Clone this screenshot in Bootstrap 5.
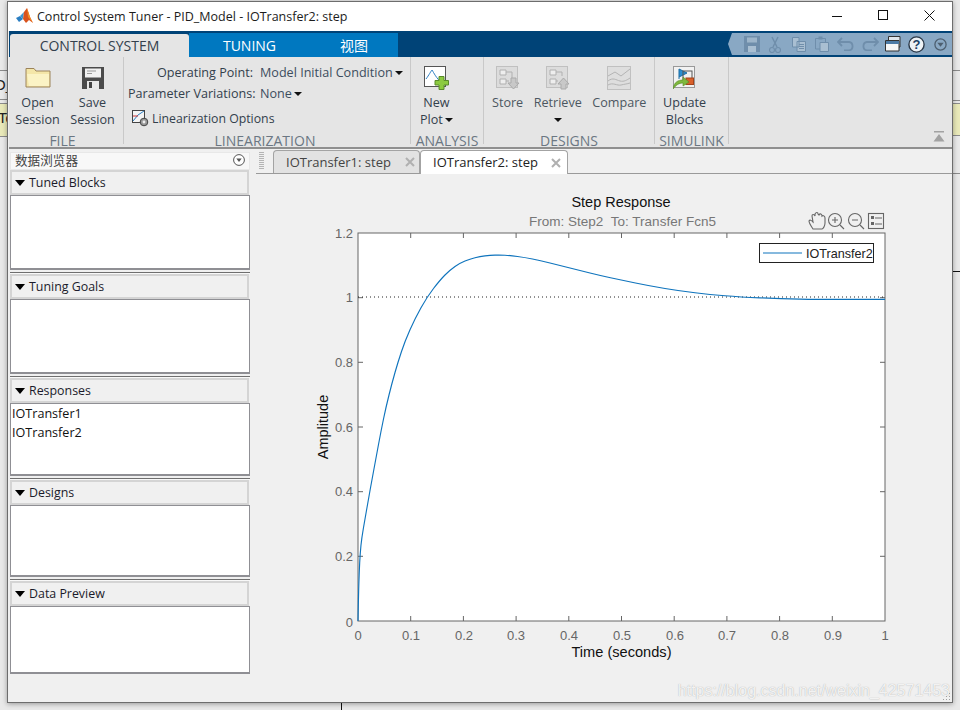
<!DOCTYPE html>
<html lang="en">
<head>
<meta charset="utf-8">
<title>Control System Tuner</title>
<link href="https://cdn.jsdelivr.net/npm/bootstrap@5.3.0/dist/css/bootstrap.min.css" rel="stylesheet">
<style>
html,body{height:710px;overflow:hidden}
body{background:#e9e9e9;font-family:"Open Sans","Noto Sans CJK SC",sans-serif;font-size:12.6px;line-height:17px;color:#33404c;position:relative}
.bk{position:absolute;z-index:0}
.bk-yl{background:#e9e9b9;border-top:1px solid #8b8b8b;border-bottom:1px solid #8b8b8b}
.bk-ln{background:#8b8b8b;height:1px}
.bk-tx{font-family:"Liberation Sans",sans-serif;font-size:15px;color:#222;line-height:18px}
.win{position:relative;z-index:1;margin:1px 0 0 7px;width:946px;height:702px;background:#f0f0f0;border:1px solid #6d6d6d;box-shadow:0 1px 5px rgba(0,0,0,.35);overflow:hidden}
.ttl{height:29px;background:#fff;color:#1c1c1c;padding-left:8px}
.ttl-t{margin-left:4px;font-size:12.5px}
.ctl{width:46px;height:29px;padding-bottom:3px}
.rtabs{height:26px;background:#004377;margin-left:1px}
.rt-blue{height:24px;width:209px;background:#0078c0;align-self:flex-end;color:#fff;font-size:14px}
.rt-on{width:179px;height:23px;margin-left:1px;background:#e5e5e5;border-radius:3px 3px 0 0;align-self:flex-end;color:#33404c;font-size:14px}
.rt-a{width:121px}
.rt-b{width:88px}
.qa{margin-left:auto;height:22px;width:224px;margin-top:2px;background:#89a8c4;clip-path:polygon(4px 0,100% 0,100% 100%,4px 100%,0 50%);padding-left:12px}
.qa-i{width:24.4px;height:22px}
.rib{height:92px;margin-left:1px;background:#e5e5e5;border-bottom:2px solid #8f8f8f;position:relative}
.grp{padding-top:3px;position:relative}
.grp-s{border-right:1px solid #c9c9c9;height:87px}
.grp-b{flex:1 1 auto}
.grp-l{font-size:14px;line-height:17px;color:#6b7783;text-align:center;height:18px;margin-bottom:-6px;white-space:nowrap}
.rb{padding-top:6px;text-align:center;white-space:nowrap}
.rb-i{height:27.5px}
.rb-t{display:block;line-height:17px}
.dim{color:#4c5761}
.car{display:inline-block;width:0;height:0;border-left:4.5px solid transparent;border-right:4.5px solid transparent;border-top:4.5px solid #111;vertical-align:2px;margin-left:2px}
.f-w{width:115px}
.f-b{padding-left:1px}
.f-l{padding-right:7px}
.l-w{width:287px}
.l-b{padding-top:1.5px}
.a-w{width:73px}
.a-b{padding-left:9px}
.d-w{width:171px}
.d-b{padding-left:8px;gap:10.500px}
.s-w{width:74px}
.s-b{padding-left:8px}
.rb55{width:55px}
.lbl{width:125px;text-align:right;white-space:nowrap;flex:none}
.lin-r{height:21.5px;padding-left:4px;white-space:nowrap}
.lin-o{margin-top:3px}
.lin-v{margin-left:7px;color:#3c4d5e}
.lin-t{margin-left:3px;font-size:12.3px}
.clp{position:absolute;right:7px;bottom:5px}
.left{width:240px;margin-left:2px;margin-top:3px;flex:none}
.ph{height:18px;background:#f8f8f8;padding:0 4px 2px;color:#444;border:1px solid #e8e8e8}
.sec-h{height:25px;background:#f0f0f0;border:2px solid #d4d4d4;color:#1b1b2b;padding-left:3px;margin-right:1px;line-height:20px;font-size:12.4px}
.arr{width:0;height:0;border-left:5.5px solid transparent;border-right:5.5px solid transparent;border-top:6px solid #000;margin-right:4px}
.sec-b{background:#fff;border:1px solid #8f8f94;border-bottom-width:2px;color:#111;padding:0 1px;line-height:19px}
.h75{height:75px}.h73{height:73px}.h72{height:72px}.h68{height:68px}
.sep{height:2px;border-top:1px solid #6f6f6f;margin-top:2px;background:#f8f8f8}
.main{width:696px;margin-left:6px}
.tabs{height:25px;position:relative;border-bottom:1px solid #9a9a9a;padding-top:1px;padding-left:17px}
.grip{position:absolute;left:3px;top:3px;width:5px;height:17px;background:repeating-linear-gradient(#b4b4b4 0 1px,transparent 1px 2px)}
.dt{width:147px;height:23px;border:1px solid #a3a3a3;border-bottom:0;border-radius:4px 4px 0 0;background:#e2e2e2;color:#444;padding-left:12px;font-size:13px;white-space:nowrap}
.dt-on{width:148px;background:#fff;color:#222;position:relative;height:24px;border-color:#a3a3a3}
.dt-x{margin-left:auto;margin-right:4px}
.dt-on .dt-x{margin-right:6px}
.plot{display:block;width:696px;height:528px;font-family:"Liberation Sans",sans-serif}
.wm{position:absolute;right:2px;bottom:1px;font:16px/20px "Liberation Sans",sans-serif;color:rgba(255,255,255,.85);text-shadow:0 0 1px rgba(130,130,130,.7);white-space:nowrap}
.rsz{position:absolute;right:1px;bottom:1px}
</style>
</head>
<body>
<!-- desktop behind the window -->
<div class="bk bk-ln" style="left:0;top:70px;width:7px"></div>
<div class="bk bk-ln" style="left:0;top:99px;width:7px"></div>
<div class="bk bk-tx" style="left:-6px;top:76px">O_</div>
<div class="bk bk-yl" style="left:0;top:103px;width:7px;height:34px"></div>
<div class="bk bk-tx" style="left:-2px;top:109px">To</div>
<div class="bk bk-ln" style="left:953px;top:70px;width:7px"></div>
<div class="bk bk-ln" style="left:953px;top:100px;width:7px"></div>
<div class="bk bk-yl" style="left:953px;top:103px;width:7px;height:33px"></div>
<div class="bk bk-ln" style="left:953px;top:173px;width:7px"></div>
<div class="bk" style="left:953px;top:271px;width:7px;height:1px;background:#111"></div>
<div class="bk" style="left:341px;top:703px;width:1px;height:7px;background:#111"></div>

<div class="win">
  <div class="ttl d-flex align-items-center">
    <svg width="17" height="17" viewBox="0 0 17 17"><polygon points="0,10 4,8 7,11 3,14" fill="#2b7ec2"/><polygon points="4,8 8,4 7,11" fill="#3b95d0"/><polygon points="8,4 11,0 14,9 17,15 13,12 10,15 7,11" fill="#d9531e"/><polygon points="11,0 14,9 17,15 12,9" fill="#f08a24"/></svg>
    <span class="ttl-t">Control System Tuner - PID_Model - IOTransfer2: step</span>
    <div class="ms-auto d-flex">
      <div class="ctl d-flex align-items-center justify-content-center"><svg width="11" height="11"><path d="M0 6.5H10" stroke="#111"/></svg></div>
      <div class="ctl d-flex align-items-center justify-content-center"><svg width="11" height="11"><rect x=".5" y=".5" width="9" height="9" fill="none" stroke="#111"/></svg></div>
      <div class="ctl d-flex align-items-center justify-content-center"><svg width="11" height="11"><path d="M.5 .5L10.5 10.5M10.5 .5L.5 10.5" stroke="#111"/></svg></div>
    </div>
  </div>

  <div class="rtabs d-flex">
    <div class="rt-on d-flex align-items-center justify-content-center">CONTROL SYSTEM</div>
    <div class="rt-blue d-flex">
      <div class="rt-a d-flex align-items-center justify-content-center">TUNING</div>
      <div class="rt-b d-flex align-items-center justify-content-center">视图</div>
    </div>
    <div class="qa d-flex align-items-center">
      <div class="qa-i d-flex align-items-center justify-content-center"><svg width="16" height="16"><path d="M0 0H16V16H0Z" fill="#6f8eab"/><rect x="3" y="1.500" width="10" height="5" fill="#9db5ca"/><rect x="4" y="10" width="8" height="6" fill="#a9bfd2"/></svg></div>
      <div class="qa-i d-flex align-items-center justify-content-center"><svg width="12" height="17"><path d="M9 1L4 11M3 1L8 11" stroke="#6f8eab" stroke-width="1.500"/><circle cx="3" cy="14" r="2.500" fill="none" stroke="#6f8eab" stroke-width="1.200"/><circle cx="9" cy="14" r="2.500" fill="none" stroke="#6f8eab" stroke-width="1.200"/></svg></div>
      <div class="qa-i d-flex align-items-center justify-content-center"><svg width="14" height="15"><path d="M.5 .5H7V10H.5ZM5 4.500H13.500V14.500H5Z" fill="#a9bfd2" stroke="#6f8eab"/><path d="M7 7.500H12M7 9.500H12M7 11.500H12" stroke="#6f8eab"/></svg></div>
      <div class="qa-i d-flex align-items-center justify-content-center"><svg width="14" height="16"><path d="M.5 2.500H10.500V13H.5Z" fill="#89a8c4" stroke="#6f8eab"/><rect x="3.500" y=".5" width="4" height="3" fill="#6f8eab"/><path d="M5 6.500H13.500V15.500H5Z" fill="#a9bfd2" stroke="#6f8eab"/></svg></div>
      <div class="qa-i d-flex align-items-center justify-content-center"><svg width="18" height="14"><path d="M5 1L1 5L5 9M1 5H12A4.200 4.200 0 0 1 12 13.300H7" fill="none" stroke="#6f8eab" stroke-width="1.800"/></svg></div>
      <div class="qa-i d-flex align-items-center justify-content-center"><svg width="18" height="14"><path d="M13 1L17 5L13 9M17 5H6A4.200 4.200 0 0 0 6 13.300H11" fill="none" stroke="#6f8eab" stroke-width="1.800"/></svg></div>
      <div class="qa-i d-flex align-items-center justify-content-center"><svg width="16" height="16"><path d="M3.500 .5H15V11H3.500Z" fill="#dfe6ec" stroke="#333"/><path d="M.5 4.500H14V15H.5Z" fill="#f6f6f6" stroke="#333"/><rect x="1" y="5" width="13" height="3" fill="#4d7ba6"/></svg></div>
      <div class="qa-i d-flex align-items-center justify-content-center"><svg width="17" height="17"><circle cx="8.500" cy="8.500" r="7.600" fill="#eef2f6" stroke="#2c3a49" stroke-width="1.400"/><text x="8.500" y="13" text-anchor="middle" font-size="13" font-weight="700" fill="#1d3f66" font-family="Liberation Sans">?</text></svg></div>
      <div class="qa-i d-flex align-items-center justify-content-center"><svg width="13" height="13"><circle cx="6.500" cy="6.500" r="5.600" fill="none" stroke="#4d5f70" stroke-width="1.300"/><path d="M3.300 4.800H9.700L6.500 8.800Z" fill="#4d5f70"/></svg></div>
    </div>
  </div>

  <div class="rib d-flex">
    <div class="grp grp-s f-w d-flex flex-column">
      <div class="grp-b f-b d-flex">
        <div class="rb rb55">
          <div class="rb-i"><svg width="26" height="24" viewBox="0 0 26 24"><path d="M1 2.500H9L11 5H25V21H1Z" fill="#f4e6a8" stroke="#9c835a"/><path d="M2 8H24V20H4Z" fill="#fbf3c5"/></svg></div>
          <span class="rb-t">Open</span><span class="rb-t">Session</span>
        </div>
        <div class="rb rb55">
          <div class="rb-i"><svg width="24" height="24" viewBox="0 0 24 24"><path d="M1 1H23V23H1Z" fill="#4b4b4b"/><rect x="4" y="2.500" width="16" height="9" fill="#f1f1f1"/><path d="M6 5H15M6 7.500H11" stroke="#999"/><rect x="6" y="15" width="12" height="8" fill="#e8e8e8"/><rect x="8" y="16" width="3" height="6" fill="#444"/></svg></div>
          <span class="rb-t">Save</span><span class="rb-t">Session</span>
        </div>
      </div>
      <div class="grp-l f-l">FILE</div>
    </div>

    <div class="grp grp-s l-w d-flex flex-column">
      <div class="grp-b l-b">
        <div class="lin-r d-flex align-items-center"><span class="lbl">Operating Point:</span><span class="lin-v">Model Initial Condition<i class="car"></i></span></div>
        <div class="lin-r d-flex align-items-center"><span class="lbl">Parameter Variations:</span><span class="lin-v">None<i class="car"></i></span></div>
        <div class="lin-r lin-o d-flex align-items-center ps-2">
          <svg width="17" height="17" viewBox="0 0 17 17"><rect x=".5" y=".5" width="12" height="12" fill="#f4f4f4" stroke="#444"/><path d="M1 11L6 5L12 1" stroke="#2b7ec2" fill="none"/><path d="M1 6H6" stroke="#c33"/><circle cx="12" cy="12" r="3.800" fill="#999" stroke="#444"/><circle cx="12" cy="12" r="1.400" fill="#eee"/></svg>
          <span class="lin-t">Linearization Options</span>
        </div>
      </div>
      <div class="grp-l pe-1">LINEARIZATION</div>
    </div>

    <div class="grp grp-s a-w d-flex flex-column">
      <div class="grp-b a-b d-flex">
        <div class="rb">
          <div class="rb-i"><svg width="25" height="24" viewBox="0 0 25 24"><rect x=".5" y=".5" width="21" height="20" fill="#fff" stroke="#555"/><path d="M2 13C5 9 7 5 8 4C10 7 12 12 18 17" fill="none" stroke="#2b7ec2"/><path d="M15 10.500H20V14.500H24.500V19H20V23.500H15V19H11V14.500H15Z" fill="#8ccb3f" stroke="#5a8c2a"/></svg></div>
          <span class="rb-t">New</span><span class="rb-t">Plot<i class="car"></i></span>
        </div>
      </div>
      <div class="grp-l">ANALYSIS</div>
    </div>

    <div class="grp grp-s d-w d-flex flex-column">
      <div class="grp-b d-b d-flex">
        <div class="rb dim">
          <div class="rb-i"><svg width="24" height="24" viewBox="0 0 24 24"><rect x=".5" y=".5" width="21" height="21" fill="#dcdcdc" stroke="#c0c0c0"/><path d="M4 4H10V9H4ZM4 13H10V18H4Z" fill="#eee" stroke="#b0b0b0"/><path d="M10 6H16V14M10 15H13" fill="none" stroke="#b0b0b0"/><path d="M15 12H20V17H23L17.500 23L12 17H15Z" fill="#c8c8c8" stroke="#aaa"/></svg></div>
          <span class="rb-t">Store</span>
        </div>
        <div class="rb dim">
          <div class="rb-i"><svg width="24" height="24" viewBox="0 0 24 24"><rect x=".5" y=".5" width="21" height="21" fill="#dcdcdc" stroke="#c0c0c0"/><path d="M4 4H10V9H4ZM4 13H10V18H4Z" fill="#eee" stroke="#b0b0b0"/><path d="M10 6H16V10M10 15H12" fill="none" stroke="#b0b0b0"/><path d="M15 23V18H12L17.500 12L23 18H20V23Z" fill="#c8c8c8" stroke="#aaa"/></svg></div>
          <span class="rb-t">Retrieve</span><span class="rb-t"><i class="car m-0"></i></span>
        </div>
        <div class="rb dim">
          <div class="rb-i"><svg width="24" height="24" viewBox="0 0 24 24"><rect x=".5" y=".5" width="23" height="23" fill="#dedede" stroke="#c0c0c0"/><path d="M1 10L8 6L14 10L23 3M1 15C6 11 9 14 13 15S20 14 23 12M1 19C6 16 10 20 14 19S20 18 23 17" fill="none" stroke="#b4b4b4"/></svg></div>
          <span class="rb-t">Compare</span>
        </div>
      </div>
      <div class="grp-l">DESIGNS</div>
    </div>

    <div class="grp grp-s s-w d-flex flex-column">
      <div class="grp-b s-b d-flex">
        <div class="rb">
          <div class="rb-i"><svg width="24" height="24" viewBox="0 0 24 24"><rect x=".5" y=".5" width="21" height="21" fill="#f2f2f2" stroke="#999"/><path d="M6 3V13M6 3L14 7L6 11" fill="#2b8ed0" stroke="#1c6ca3"/><rect x="10" y="5" width="9" height="9" fill="none" stroke="#555"/><rect x="13" y="12" width="7.500" height="6.500" fill="#d9602a" stroke="#a4441b"/><path d="M0 23C1 16 5 14 10 14V11L16 16L10 20V17C6 17 3 19 0 23Z" fill="#7fb83d" stroke="#558a26" stroke-width=".6"/></svg></div>
          <span class="rb-t">Update</span><span class="rb-t">Blocks</span>
        </div>
      </div>
      <div class="grp-l">SIMULINK</div>
    </div>

    <svg class="clp" width="12" height="12" viewBox="0 0 12 12"><path d="M1 1H11V2.500H1ZM6 4L11.500 11.500H.5Z" fill="#a2a2a2"/></svg>
  </div>

  <div class="d-flex">
    <div class="left">
      <div class="ph d-flex align-items-center justify-content-between">
        <span>数据浏览器</span>
        <svg width="12" height="12"><circle cx="6" cy="6" r="5.400" fill="#fff" stroke="#555"/><path d="M3.300 4.500H8.700L6 8Z" fill="#555"/></svg>
      </div>
      <div class="sec-h d-flex align-items-center"><i class="arr"></i>Tuned Blocks</div>
      <div class="sec-b h75"></div>
      <div class="sep"></div>
      <div class="sec-h d-flex align-items-center"><i class="arr"></i>Tuning Goals</div>
      <div class="sec-b h75"></div>
      <div class="sep"></div>
      <div class="sec-h d-flex align-items-center"><i class="arr"></i>Responses</div>
      <div class="sec-b h73"><div>IOTransfer1</div><div>IOTransfer2</div></div>
      <div class="sep"></div>
      <div class="sec-h d-flex align-items-center"><i class="arr"></i>Designs</div>
      <div class="sec-b h72"></div>
      <div class="sep"></div>
      <div class="sec-h d-flex align-items-center"><i class="arr"></i>Data Preview</div>
      <div class="sec-b h68"></div>
    </div>

    <div class="main">
      <div class="tabs d-flex">
        <i class="grip"></i>
        <div class="dt d-flex align-items-center">IOTransfer1: step
          <svg class="dt-x" width="10" height="10"><path d="M1 1L9 9M9 1L1 9" stroke="#b0b0b0" stroke-width="2"/></svg></div>
        <div class="dt dt-on d-flex align-items-center">IOTransfer2: step
          <svg class="dt-x" width="10" height="10"><path d="M1 1L9 9M9 1L1 9" stroke="#b0b0b0" stroke-width="2"/></svg></div>
      </div>
      <svg class="plot" viewBox="256 174 696 528">
        <rect x="358" y="233" width="527" height="388" fill="#fff" stroke="#666"/>
        <g stroke="#666">
          <path d="M410.700 233v5M463.400 233v5M516.100 233v5M568.800 233v5M621.500 233v5M674.200 233v5M726.900 233v5M779.600 233v5M832.300 233v5"/>
          <path d="M410.700 621v-5M463.400 621v-5M516.100 621v-5M568.800 621v-5M621.500 621v-5M674.200 621v-5M726.900 621v-5M779.600 621v-5M832.300 621v-5"/>
          <path d="M358 297.700h5M358 362.300h5M358 427h5M358 491.700h5M358 556.300h5M885 297.700h-5M885 362.300h-5M885 427h-5M885 491.700h-5M885 556.300h-5"/>
        </g>
        <path d="M358 297H885" stroke="#222" stroke-dasharray="1 3" fill="none"/>
        <path id="stepCurve" fill="none" stroke="#0f74bd" stroke-width="1.150" d="M358 621"/>
        <g fill="#666" font-size="13" text-anchor="end">
          <text x="353" y="238">1.2</text><text x="353" y="302">1</text><text x="353" y="367">0.8</text><text x="353" y="432">0.6</text><text x="353" y="496">0.4</text><text x="353" y="561">0.2</text><text x="353" y="627">0</text>
        </g>
        <g fill="#666" font-size="13" text-anchor="middle">
          <text x="358" y="640">0</text><text x="411" y="640">0.1</text><text x="464" y="640">0.2</text><text x="516" y="640">0.3</text><text x="569" y="640">0.4</text><text x="622" y="640">0.5</text><text x="675" y="640">0.6</text><text x="727" y="640">0.7</text><text x="780" y="640">0.8</text><text x="833" y="640">0.9</text><text x="885" y="640">1</text>
        </g>
        <text x="621" y="207" text-anchor="middle" font-size="14.5" fill="#111">Step Response</text>
        <text x="622.500" y="226" text-anchor="middle" font-size="13.5" fill="#777">From: Step2&#160;&#160;To: Transfer Fcn5</text>
        <text x="621.500" y="657" text-anchor="middle" font-size="14.6" fill="#111">Time (seconds)</text>
        <text transform="translate(328 427) rotate(-90)" text-anchor="middle" font-size="14.5" fill="#111">Amplitude</text>
        <rect x="759.500" y="243.500" width="114" height="19" fill="#fff" stroke="#222"/>
        <path d="M763 253H802" stroke="#0f74bd" stroke-width="1.100"/>
        <text x="806" y="258" font-size="12.6" fill="#222">IOTransfer2</text>
        <g fill="none" stroke="#666" stroke-width="1.100">
          <path d="M813 229C811 226 809 223 809 221C810 219 812 221 813 222L812 216C812 214 814 214 815 216L815 214C816 212 818 212 818 214L819 215C820 213 822 214 822 216C823 215 825 216 825 218V223C825 226 823 229 822 229Z"/>
          <circle cx="835" cy="220" r="6.500"/><path d="M840 225L844 229M832 220H838M835 217V223"/>
          <circle cx="855" cy="220" r="6.500"/><path d="M860 225L864 229M852 220H858"/>
          <rect x="868.500" y="213.500" width="15" height="15"/>
          <path d="M875 218H882M875 224H882"/>
        </g>
        <path d="M871 216h3v3h-3zM871 222h3v3h-3z" fill="#666"/>
      </svg>
    </div>
  </div>
  <div class="wm">https://blog.csdn.net/weixin_42571453</div>
  <svg class="rsz" width="9" height="9"><path d="M7 1h1v1h-1zM4 4h1v1h-1zM7 4h1v1h-1zM1 7h1v1h-1zM4 7h1v1h-1zM7 7h1v1h-1z" fill="#a0a0a0"/></svg>
</div>
<script src="https://cdn.jsdelivr.net/npm/bootstrap@5.3.0/dist/js/bootstrap.bundle.min.js"></script>
<script>
// Step response samples (page px), smoothed into quadratic segments.
const pts=[[358,621],[358.5,595],[359.2,572],[360.2,553],[361.7,538],[365,519],[368.3,500],[372,479.5],[376,458],[381,431],[386,407],[392,383],[398,362],[405,341],[415,318.5],[427,297],[440,280],[450,270],[460,263],[470,259],[480,256.5],[490,255.3],[500,255],[510,255.5],[525,257.5],[540,260.5],[560,265.5],[580,270.5],[600,275.5],[621,280],[650,286],[680,291],[710,294.5],[740,297],[780,298.7],[820,299.5],[885,299.3]];
let d=`M${pts[0]}`;
for(let i=1;i<pts.length-1;i++){const m=[(pts[i][0]+pts[i+1][0])/2,(pts[i][1]+pts[i+1][1])/2];d+=`Q${pts[i]} ${m}`;}
d+=`L${pts[pts.length-1]}`;
document.getElementById('stepCurve').setAttribute('d',d);
</script>
</body>
</html>
